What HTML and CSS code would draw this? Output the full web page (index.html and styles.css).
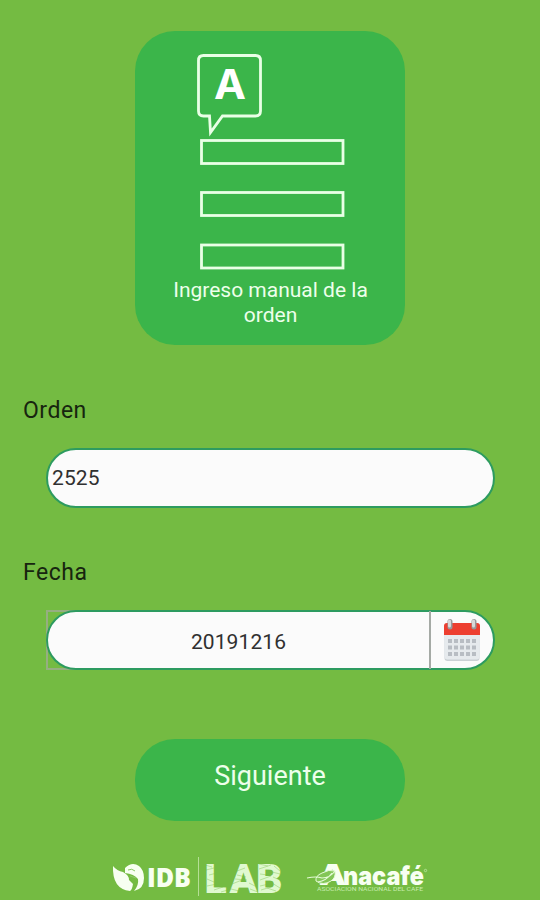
FILE: index.html
```html
<!DOCTYPE html>
<html lang="es">
<head>
<meta charset="utf-8">
<title>Ingreso manual de la orden</title>
<link rel="stylesheet" href="styles.css">
</head>
<body>
<main class="screen">
  <section class="card">
    <svg class="card-icon" width="160" height="222" viewBox="190 50 160 222" fill="none" stroke="#e9ffe6" stroke-width="2.800">
      <path d="M203.500 55.500H255.500Q260.500 55.500 260.500 60.500V111Q260.500 116 255.500 116H222.500L210.500 132.500L209.500 116H203.500Q198.500 116 198.500 111V60.500Q198.500 55.500 203.500 55.500Z"/>
      <text class="bubble-letter" x="214" y="98.500" textLength="32" lengthAdjust="spacingAndGlyphs">A</text>
      <rect x="201.500" y="140.500" width="141.500" height="23"/>
      <rect x="201.500" y="192.500" width="141.500" height="23"/>
      <rect x="201.500" y="245" width="141.500" height="23"/>
    </svg>
    <h1 class="card-title">Ingreso manual de la<br>orden</h1>
  </section>

  <form class="form">
    <label class="label" for="orden">Orden</label>
    <input class="field field-order" id="orden" value="2525">
    <label class="label label-date" for="fecha">Fecha</label>
    <div class="date-row">
      <div class="field date-field">
        <input class="date-input" id="fecha" value="20191216">
        <svg class="calendar" width="38" height="44" viewBox="0 0 38 44">
          <rect x="1.500" y="5" width="35" height="38" rx="3" fill="#cbd1d5"/>
          <rect x="1.500" y="5" width="35" height="36.500" rx="3" fill="#e6eaed"/>
          <path d="M1 17V8Q1 5 4 5H34Q37 5 37 8V17Z" fill="#ed3f30"/>
          <g fill="none" stroke="#b8bdc3" stroke-width="4" stroke-dasharray="4 2">
            <path d="M5 23H33M5 29.500H33M5 36H33"/>
          </g>
          <g stroke-linecap="round"><path d="M7 3.500V9M31 3.500V9" stroke="#97999b" stroke-width="5"/><path d="M6.500 3V8M30.500 3V8" stroke="#d7d9d9" stroke-width="3"/></g>
        </svg>
      </div>
    </div>
    <button class="next" type="button">Siguiente</button>
  </form>

  <footer class="logos">
    <svg width="340" height="50" viewBox="100 850 340 50">
      <path d="M113 866Q117 871 123 872Q129 875 129 880L133 884Q132 890 130 891Q112 889 113 866Z" fill="#f7fff1"/>
      <path d="M125 868Q132 861 139 866Q144 870 144 878Q144 889 134 891Q139 885 138 879Q134 874 125 873Z" fill="#f7fff1"/>
      <path d="M128 870Q132 868 135 871M130 876L136 878" fill="none" stroke="#8bc965" stroke-width="1"/>
      <text class="idb" x="147" y="887" textLength="44" lengthAdjust="spacingAndGlyphs">IDB</text>
      <path d="M198.500 857V896" stroke="#b5df96"/>
      <text class="lab" y="892.500"><tspan x="204.500">L</tspan><tspan x="229.500">A</tspan><tspan x="256">B</tspan></text>
      <g stroke="#74bb42" stroke-width=".7" opacity=".55" fill="none">
        <path d="M205 865l7 2m-6 3l8-2m-5 7l8-2m-10 6l7 3m-7 4l10-2m-3 6l9-3m-2 5l10-3"/>
        <path d="M237 871l8-3m-8 7l9 2m-11 2l12 1m-15 4l10-4m-11 9l8 2m10-8l8 4m-7 2l8 3"/>
        <path d="M259 864l9 2m-9 3l12-4m-11 9l8 1m-8 5l11-4m-11 10l9-2m-8 6l10-3m3-21l6 5m-8 1l8 2m-7 3l9 4m-10 2l8 5m-13 0l9 3"/>
      </g>
      <text class="brand" y="885"><tspan class="brand-a" x="319" textLength="27" lengthAdjust="spacingAndGlyphs">A</tspan><tspan x="343" textLength="81" lengthAdjust="spacingAndGlyphs">nacafé</tspan></text>
      <path d="M316 881Q315 876 322 873Q329 869 335 871Q336 878 331 881Q323 886 316 881Z" fill="#83c657" stroke="#e5fbd7"/>
      <path d="M307 878Q316 876 322 878Q330 878 335 871M318 882Q326 881 332 873" fill="none" stroke="#e5fbd7" stroke-width="1.100"/>
      <circle cx="425.500" cy="870.500" r="1.200" fill="none" stroke="#c7edae" stroke-width=".7"/>
      <text class="tagline" x="317" y="891" textLength="106" lengthAdjust="spacingAndGlyphs">ASOCIACION NACIONAL DEL CAFE</text>
    </svg>
  </footer>
</main>
</body>
</html>
```
FILE: styles.css
```css
* { box-sizing: border-box; }
body { margin: 0; background: #74bb42; font-family: Roboto, sans-serif; color: #17250f; }
.screen { width: 540px; height: 900px; padding-top: 31px; display: flex; flex-direction: column; overflow: hidden; }
.card { width: 270px; height: 315px; margin: 0 auto; padding-top: 19px; border-radius: 40px; background: #3bb54a; text-align: center; }
.card-icon { display: block; margin-left: 55px; }
.bubble-letter { font: 700 41px Inter, sans-serif; fill: #fff; stroke: none; }
.card-title { margin: 6px 0 0 1px; color: #edffeb; font-size: 21px; line-height: 25px; font-weight: 400; letter-spacing: 0; }
.form { display: flex; flex-direction: column; padding-top: 51px; }
.label { margin-left: 23px; height: 30px; line-height: 30px; font-size: 23px; letter-spacing: .5px; }
.field { width: 449px; height: 60px; margin-left: 46px; border: 2px solid #2d9b60; border-radius: 30px; background: #fbfbfb; }
.field-order { margin-top: 22px; padding: 0 4px; color: #303030; font: 21px Roboto, sans-serif; letter-spacing: .1px; outline: 0; }
.label-date { margin-top: 50px; }
.date-row { margin: 22px 0 0 46px; width: 449px; height: 60px; background: linear-gradient(#96ae82, #96ae82) 0 0 / 385px 2px no-repeat, linear-gradient(#96ae82, #96ae82) 0 100% / 385px 2px no-repeat, linear-gradient(#96ae82, #96ae82) 0 0 / 2px 100% no-repeat; }
.date-field { margin: 0; display: flex; align-items: center; }
.date-input { width: 383px; height: 58px; padding: 4px 0 0; border: 0; border-right: 2px solid #a5aaa5; background: transparent; color: #303030; text-align: center; font: 21px Roboto, sans-serif; letter-spacing: .1px; outline: 0; }
.calendar { margin-left: 12px; }
.next { width: 270px; height: 82px; margin: 69px auto 0; padding: 0 0 9px; border: 0; border-radius: 40px; background: #3bb54a; color: #edffeb; font: 27px Roboto, sans-serif; letter-spacing: 0; }
.logos { margin: 29px 0 0 100px; height: 50px; }
.logos svg { display: block; overflow: visible; }
.idb { font: 800 26px "Open Sans", sans-serif; fill: #f7fff1; }
.lab { font: 900 41px Roboto, sans-serif; fill: #e0f9d0; }
.brand { font: 900 25px Inter, sans-serif; fill: #f7fff1; }
.brand-a { font-size: 29px; }
.tagline { font: 5px Roboto, sans-serif; fill: #c7edae; }
```
